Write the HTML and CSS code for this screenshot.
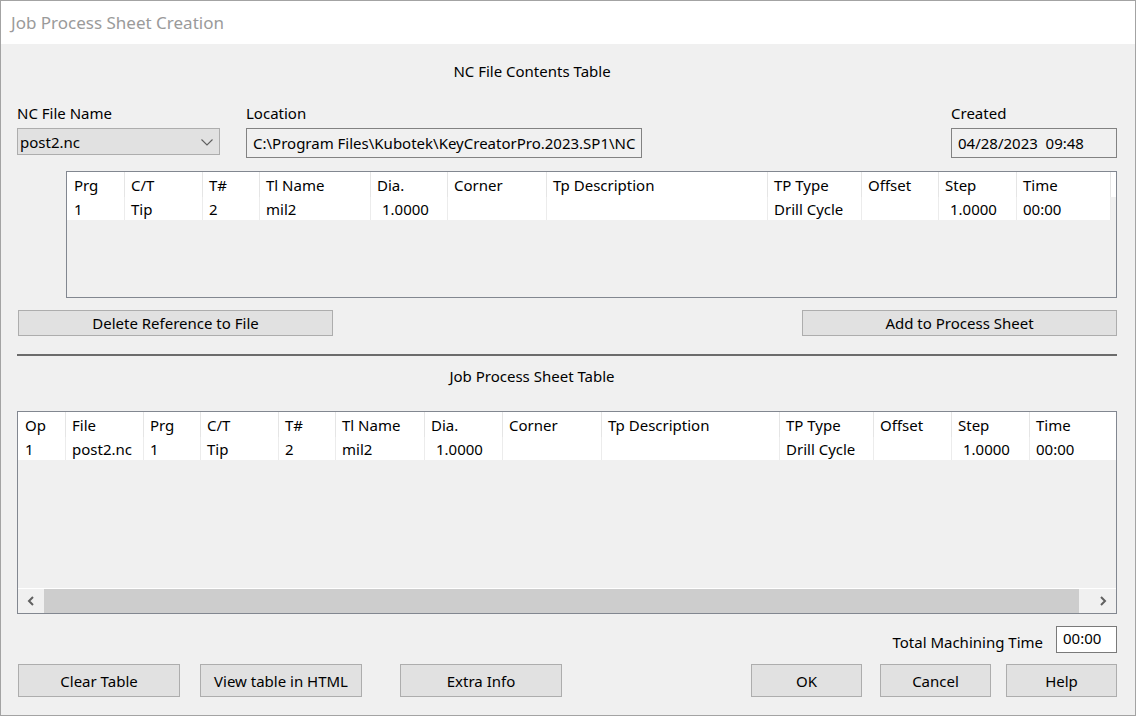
FILE: index.html
```html
<!DOCTYPE html>
<html>
<head>
<meta charset="utf-8">
<title>Job Process Sheet Creation</title>
<link rel="stylesheet" href="styles.css">
</head>
<body>
<div class="window">
  <div class="titlebar"><span class="title">Job Process Sheet Creation</span></div>
  <div class="content">
    <div class="section-title t1">NC File Contents Table</div>

    <div class="fields">
      <div class="field f-name">
        <div class="label">NC File Name</div>
        <div class="combo">
          <span>post2.nc</span>
          <svg class="combo-arrow" width="12" height="7" viewBox="0 0 12 7"><path d="M0.5 0.5 L6 6 L11.5 0.5" fill="none" stroke="#5f5f5f" stroke-width="1.1"/></svg>
        </div>
      </div>
      <div class="field f-loc">
        <div class="label">Location</div>
        <div class="textbox loc"><span>C:\Program Files\Kubotek\KeyCreatorPro.2023.SP1\NC</span></div>
      </div>
      <div class="field f-created">
        <div class="label">Created</div>
        <div class="textbox created">04/28/2023&nbsp;&nbsp;09:48</div>
      </div>
    </div>

    <div class="list list1">
      <div class="row head">
        <div class="cell first">Prg</div>
        <div class="cell">C/T</div>
        <div class="cell">T#</div>
        <div class="cell">Tl Name</div>
        <div class="cell">Dia.</div>
        <div class="cell">Corner</div>
        <div class="cell">Tp Description</div>
        <div class="cell">TP Type</div>
        <div class="cell">Offset</div>
        <div class="cell">Step</div>
        <div class="cell">Time</div>
        <div class="cell filler"></div>
      </div>
      <div class="row data">
        <div class="cell first">1</div>
        <div class="cell">Tip</div>
        <div class="cell">2</div>
        <div class="cell">mil2</div>
        <div class="cell num">1.0000</div>
        <div class="cell"></div>
        <div class="cell"></div>
        <div class="cell">Drill Cycle</div>
        <div class="cell"></div>
        <div class="cell num">1.0000</div>
        <div class="cell">00:00</div>
        <div class="cell filler"></div>
      </div>
    </div>

    <div class="btn-row">
      <div class="btn btn-delete">Delete Reference to File</div>
      <div class="btn btn-add">Add to Process Sheet</div>
    </div>

    <div class="separator"></div>

    <div class="section-title t2">Job Process Sheet Table</div>

    <div class="list list2">
      <div class="row head">
        <div class="cell first">Op</div>
        <div class="cell">File</div>
        <div class="cell">Prg</div>
        <div class="cell">C/T</div>
        <div class="cell">T#</div>
        <div class="cell">Tl Name</div>
        <div class="cell">Dia.</div>
        <div class="cell">Corner</div>
        <div class="cell">Tp Description</div>
        <div class="cell">TP Type</div>
        <div class="cell">Offset</div>
        <div class="cell">Step</div>
        <div class="cell last">Time</div>
      </div>
      <div class="row data">
        <div class="cell first">1</div>
        <div class="cell">post2.nc</div>
        <div class="cell">1</div>
        <div class="cell">Tip</div>
        <div class="cell">2</div>
        <div class="cell">mil2</div>
        <div class="cell num">1.0000</div>
        <div class="cell"></div>
        <div class="cell"></div>
        <div class="cell">Drill Cycle</div>
        <div class="cell"></div>
        <div class="cell num">1.0000</div>
        <div class="cell last">00:00</div>
      </div>
      <div class="list-space"></div>
      <div class="hscroll">
        <div class="sb-btn"><svg width="8" height="10" viewBox="0 0 8 10"><path d="M6 1 L2 5 L6 9" fill="none" stroke="#606060" stroke-width="2"/></svg></div>
        <div class="sb-track"><div class="sb-thumb"></div></div>
        <div class="sb-btn"><svg width="8" height="10" viewBox="0 0 8 10"><path d="M2 1 L6 5 L2 9" fill="none" stroke="#606060" stroke-width="2"/></svg></div>
      </div>
    </div>

    <div class="total-row">
      <span class="total-label">Total Machining Time</span>
      <div class="total-box">00:00</div>
    </div>

    <div class="bottom-row">
      <div class="btn b-clear">Clear Table</div>
      <div class="btn b-view">View table in HTML</div>
      <div class="btn b-extra">Extra Info</div>
      <div class="btn b-ok">OK</div>
      <div class="btn b-cancel">Cancel</div>
      <div class="btn b-help">Help</div>
    </div>
  </div>
</div>
</body>
</html>
```

FILE: styles.css
```css
html, body {
  margin: 0;
  padding: 0;
  background: #ffffff;
}

body {
  font-family: "Noto Sans", "Open Sans", sans-serif;
  font-size: 15px;
  color: #000;
}

.window {
  width: 1136px;
  height: 716px;
  box-sizing: border-box;
  border: 1px solid #a3a3a3;
  display: flex;
  flex-direction: column;
  background: #f0f0f0;
  overflow: hidden;
}

.titlebar {
  height: 43px;
  flex: none;
  background: #ffffff;
  display: flex;
  align-items: center;
  padding-left: 10px;
}

.title {
  font-size: 17px;
  color: #9a9a9a;
}

.content {
  flex: 1;
  display: flex;
  flex-direction: column;
  padding: 0 18px 0 16px;
}

.section-title {
  height: 24px;
  line-height: 24px;
  text-align: center;
  margin-right: 70px;
  white-space: nowrap;
}

.t1 { margin-top: 15px; }
.t2 { margin-top: 8px; }

/* fields */
.fields {
  margin-top: 20px;
  display: flex;
  align-items: flex-start;
}

.label {
  height: 21px;
  line-height: 21px;
  margin-bottom: 4px;
  white-space: nowrap;
}

.f-name { width: 203px; }
.f-loc { width: 396px; margin-left: 26px; }
.f-created { width: 166px; margin-left: auto; }

.combo {
  height: 27px;
  box-sizing: border-box;
  background: #e1e1e1;
  border: 1px solid #adadad;
  display: flex;
  align-items: center;
  justify-content: space-between;
  padding: 0 6px 0 2px;
}

.combo-arrow { margin-top: 1px; }

.textbox {
  height: 30px;
  box-sizing: border-box;
  border: 1px solid #828282;
  background: #f0f0f0;
  padding-left: 6px;
  display: flex;
  align-items: center;
  white-space: nowrap;
  overflow: hidden;
}

/* list views */
.list {
  box-sizing: border-box;
  border: 1px solid #828790;
  background: #f0f0f0;
  display: flex;
  flex-direction: column;
  overflow: hidden;
}

.list1 {
  margin-top: 13px;
  margin-left: 49px;
  height: 127px;
}

.list2 {
  margin-top: 23px;
  height: 203px;
}

.row {
  display: grid;
  white-space: nowrap;
}

.list1 .row {
  grid-template-columns: 58px 78px 57px 111px 77px 99px 221px 94px 77px 78px 94px 1fr;
}

.list2 .row {
  grid-template-columns: 48px 78px 57px 78px 57px 89px 78px 99px 178px 94px 78px 78px 1fr;
}

.row.head {
  height: 25px;
  background: #ffffff;
}

.row.data {
  height: 23px;
}

.cell {
  box-sizing: border-box;
  padding-left: 6px;
  overflow: hidden;
}

.cell.first { padding-left: 7px; }
.cell.num { padding-left: 11px; }

.head .cell {
  border-right: 1px solid #e5e5e5;
  padding-top: 1px;
  line-height: 24px;
}

.head .cell.filler,
.head .cell.last {
  border-right: none;
}

.data .cell {
  background: #ffffff;
  border-right: 1px solid #ececec;
  line-height: 22px;
  padding-top: 1px;
}

.data .cell.filler {
  background: transparent;
  border-right: none;
}

.data .cell.last { border-right: none; }

.list-space { flex: 1; }

.hscroll {
  height: 25px;
  box-sizing: border-box;
  border-top: 1px solid #ffffff;
  display: flex;
  background: #f0f0f0;
}

.sb-btn {
  width: 26px;
  display: flex;
  align-items: center;
  justify-content: center;
}

.sb-track {
  flex: 1;
  display: flex;
}

.sb-thumb {
  width: 1035px;
  background: #cdcdcd;
}

/* buttons */
.btn {
  box-sizing: border-box;
  background: #e1e1e1;
  border: 1px solid #adadad;
  display: flex;
  align-items: center;
  justify-content: center;
  white-space: nowrap;
}

.btn-row {
  margin-top: 12px;
  height: 26px;
  display: flex;
  justify-content: space-between;
}

.btn-delete { width: 315px; margin-left: 1px; }
.btn-add { width: 315px; margin-right: 0; }

.separator {
  margin-top: 18px;
  height: 2px;
  background: #6b6b6b;
}

.total-row {
  margin-top: 12px;
  height: 27px;
  display: flex;
  justify-content: flex-end;
  align-items: center;
}

.total-label {
  margin-right: 13px;
  padding-top: 4px;
}

.total-box {
  width: 61px;
  height: 27px;
  box-sizing: border-box;
  background: #ffffff;
  border: 1px solid #7a7a7a;
  padding-left: 6px;
  line-height: 22px;
}

.bottom-row {
  margin-top: 11px;
  height: 33px;
  display: flex;
}

.b-clear { width: 162px; margin-left: 1px; }
.b-view { width: 162px; margin-left: 20px; }
.b-extra { width: 162px; margin-left: 38px; }
.b-ok { width: 111px; margin-left: auto; }
.b-cancel { width: 111px; margin-left: 18px; }
.b-help { width: 111px; margin-left: 15px; }
```
